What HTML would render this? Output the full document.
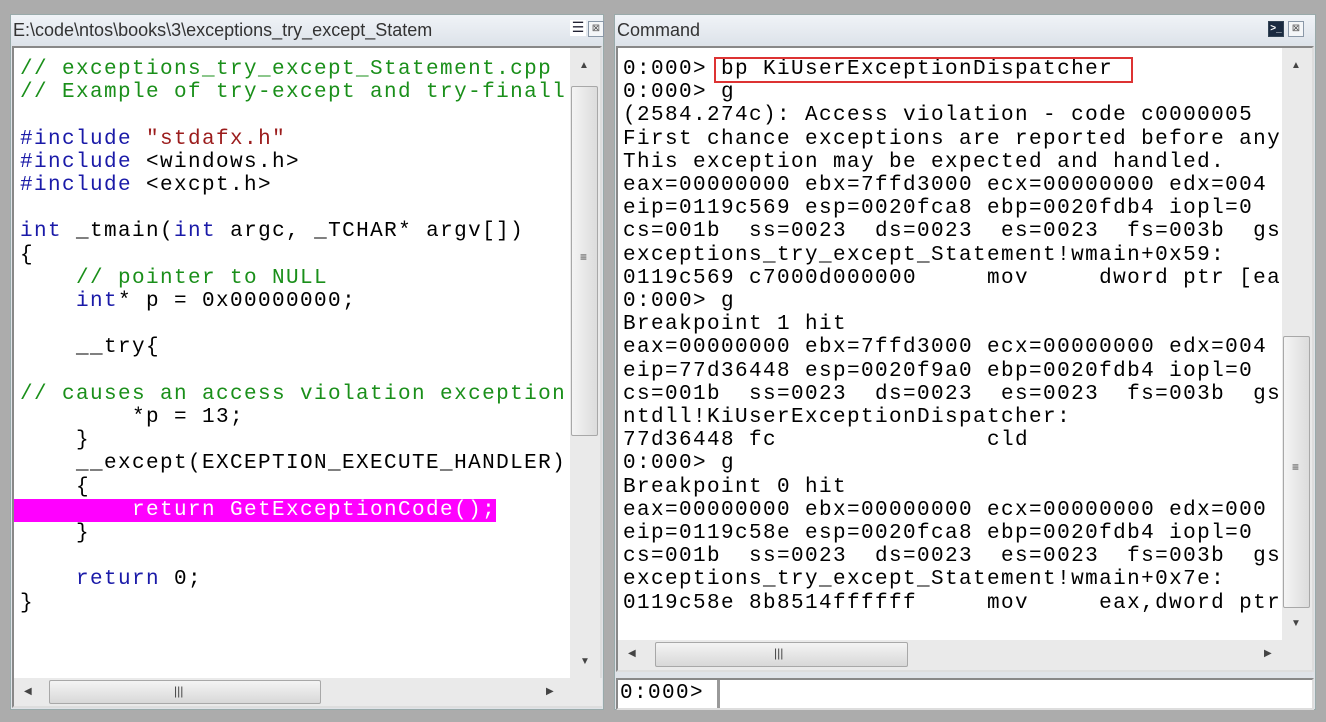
<!DOCTYPE html>
<html><head><meta charset="utf-8"><style>
*{margin:0;padding:0;box-sizing:border-box}
body{width:1326px;height:722px;background:#acacac;position:relative;overflow:hidden;font-family:"Liberation Sans",sans-serif}
.abs{position:absolute}
.title{background:linear-gradient(#f0f3f7,#dde3ea);color:#333;font-size:18px;line-height:30px;padding-left:2px;white-space:nowrap;overflow:hidden}
.code{background:#fff;font-family:"Liberation Mono",monospace;font-size:21px;letter-spacing:1.4px;line-height:23.2px;white-space:pre;overflow:hidden;color:#000}
.g{color:#1a8f1a}.b{color:#1a1aa8}.r{color:#9b1c1c}
.sb{background:#eaeaea}
.thumb{position:absolute;background:linear-gradient(90deg,#f4f4f4,#dcdcdc);border:1px solid #a8a8a8;border-radius:2px}
.thumbh{position:absolute;background:linear-gradient(#f4f4f4,#d8d8d8);border:1px solid #a8a8a8;border-radius:2px}
.arr{position:absolute;font-size:10px;color:#444}
.btn{position:absolute;width:16px;height:16px;border:1px solid #8a98a8;background:#f4f6f8;font-size:10px;line-height:14px;text-align:center;color:#555}
</style></head><body>
<!-- left panel -->
<div class="abs" style="left:10px;top:14px;width:594px;height:696px;background:#dfe3e8;border:1px solid #9aa"></div>
<div class="abs title" style="left:11px;top:15px;width:592px;height:30px">E:\code\ntos\books\3\exceptions_try_except_Statem</div>
<div class="btn" style="left:570px;top:20px;border:none;background:#fff;font-size:14px;color:#223">&#9776;</div>
<div class="btn" style="left:588px;top:21px">⊠</div>
<div class="abs" style="left:12px;top:46px;width:590px;height:662px;border:2px solid #888;border-right-color:#ddd;border-bottom-color:#ddd;background:#fff"></div>
<div class="abs code" style="left:14px;top:58px;width:556px;height:618px;padding-left:6px"><span class="g">// exceptions_try_except_Statement.cpp
// Example of try-except and try-finall</span>

<span class="b">#include</span> <span class="r">"stdafx.h"</span>
<span class="b">#include</span> &lt;windows.h&gt;
<span class="b">#include</span> &lt;excpt.h&gt;

<span class="b">int</span> _tmain(<span class="b">int</span> argc, _TCHAR* argv[])
{
    <span class="g">// pointer to NULL</span>
    <span class="b">int</span>* p = 0x00000000;

    __try{

<span class="g">// causes an access violation exception</span>
        *p = 13;
    }
    __except(EXCEPTION_EXECUTE_HANDLER)
    {
<span style="background:#ff00ff;color:#fff;margin-left:-6px;padding-left:6px">        return GetExceptionCode();</span>
    }

    <span class="b">return</span> 0;
}</div>
<div class="abs sb" style="left:570px;top:48px;width:30px;height:630px"></div>
<div class="arr" style="left:579px;top:60px">▲</div>
<div class="thumb" style="left:571px;top:86px;width:27px;height:350px"></div>
<div class="arr" style="left:580px;top:250px;font-size:12px">≡</div>
<div class="arr" style="left:580px;top:656px">▼</div>
<div class="abs sb" style="left:14px;top:678px;width:588px;height:28px"></div>
<div class="arr" style="left:24px;top:686px">◀</div>
<div class="thumbh" style="left:49px;top:680px;width:272px;height:24px"></div>
<div class="arr" style="left:174px;top:684px;font-size:12px">|||</div>
<div class="arr" style="left:546px;top:686px">▶</div>
<!-- right panel -->
<div class="abs" style="left:614px;top:14px;width:702px;height:696px;background:#dfe3e8;border:1px solid #9aa"></div>
<div class="abs title" style="left:615px;top:15px;width:700px;height:30px">Command</div>
<div class="btn" style="left:1268px;top:21px;background:#1a2a40;color:#fff;font-weight:bold;border-color:#345">&gt;_</div>
<div class="btn" style="left:1288px;top:21px">⊠</div>
<div class="abs" style="left:616px;top:46px;width:698px;height:626px;border:2px solid #888;border-right-color:#ddd;border-bottom-color:#ddd;background:#fff"></div>
<div class="abs code" style="left:618px;top:58px;width:662px;height:578px;padding-left:5px">0:000&gt; bp KiUserExceptionDispatcher
0:000&gt; g
(2584.274c): Access violation - code c0000005
First chance exceptions are reported before any
This exception may be expected and handled.
eax=00000000 ebx=7ffd3000 ecx=00000000 edx=004
eip=0119c569 esp=0020fca8 ebp=0020fdb4 iopl=0
cs=001b  ss=0023  ds=0023  es=0023  fs=003b  gs
exceptions_try_except_Statement!wmain+0x59:
0119c569 c7000d000000     mov     dword ptr [eax
0:000&gt; g
Breakpoint 1 hit
eax=00000000 ebx=7ffd3000 ecx=00000000 edx=004
eip=77d36448 esp=0020f9a0 ebp=0020fdb4 iopl=0
cs=001b  ss=0023  ds=0023  es=0023  fs=003b  gs
ntdll!KiUserExceptionDispatcher:
77d36448 fc               cld
0:000&gt; g
Breakpoint 0 hit
eax=00000000 ebx=00000000 ecx=00000000 edx=000
eip=0119c58e esp=0020fca8 ebp=0020fdb4 iopl=0
cs=001b  ss=0023  ds=0023  es=0023  fs=003b  gs
exceptions_try_except_Statement!wmain+0x7e:
0119c58e 8b8514ffffff     mov     eax,dword ptr</div>
<div class="abs" style="left:714px;top:57px;width:419px;height:26px;border:2px solid #d33"></div>
<div class="abs sb" style="left:1282px;top:48px;width:30px;height:592px"></div>
<div class="arr" style="left:1291px;top:60px">▲</div>
<div class="thumb" style="left:1283px;top:336px;width:27px;height:272px"></div>
<div class="arr" style="left:1292px;top:460px;font-size:12px">≡</div>
<div class="arr" style="left:1291px;top:618px">▼</div>
<div class="abs sb" style="left:618px;top:640px;width:694px;height:30px"></div>
<div class="arr" style="left:628px;top:648px">◀</div>
<div class="thumbh" style="left:655px;top:642px;width:253px;height:25px"></div>
<div class="arr" style="left:774px;top:646px;font-size:12px">|||</div>
<div class="arr" style="left:1264px;top:648px">▶</div>
<div class="abs" style="left:616px;top:678px;width:698px;height:32px;background:#fff;border:2px solid #888;border-right-color:#ddd;border-bottom-color:#ddd"></div>
<div class="abs code" style="left:620px;top:682px;width:96px;height:24px;background:transparent">0:000&gt;</div>
<div class="abs" style="left:717px;top:680px;width:3px;height:28px;background:#999"></div>
</body></html>
